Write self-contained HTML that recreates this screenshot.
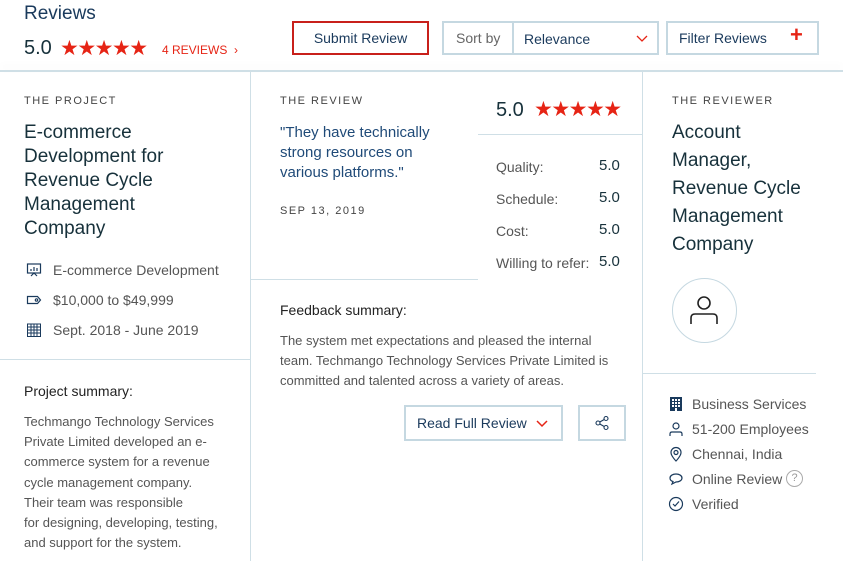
<!DOCTYPE html>
<html><head><meta charset="utf-8"><style>
*{margin:0;padding:0;box-sizing:border-box}
body{width:843px;height:561px;overflow:hidden;background:#fff;font-family:"Liberation Sans",sans-serif;position:relative;color:#555}
.a{position:absolute;white-space:nowrap}
.navy{color:#17313b}
.lab{font-size:11px;letter-spacing:1.5px;color:#444}
.star{color:#e62415}
.btn{position:absolute;border:2px solid #c5d8e1;font-size:14px;color:#1a3a5c}
.ln{position:absolute;background:#cfdfe6}
.ic{position:absolute;width:16px;height:16px}
</style></head><body>
<div class="a navy" style="left:24px;top:3px;font-size:19px;color:#1a3a5c">Reviews</div>
<div class="a navy" style="left:24px;top:37px;font-size:20px">5.0</div>
<div class="a star" style="left:60px;top:36px;font-size:21px;letter-spacing:-1.5px">★★★★★</div>
<div class="a star" style="left:162px;top:43px;font-size:12px">4 REVIEWS &nbsp;<span style="color:#e62415">›</span></div>
<div class="btn" style="left:292px;top:21px;width:137px;height:34px;border-color:#c8201b;text-align:center;line-height:30px">Submit Review</div>
<div class="btn" style="left:442px;top:21px;width:217px;height:34px"></div>
<div class="a" style="left:456px;top:30px;font-size:14px;color:#666">Sort by</div>
<div class="ln" style="left:512px;top:23px;width:2px;height:30px;background:#c5d8e1"></div>
<div class="a" style="left:524px;top:31px;font-size:14px;color:#1a3a5c">Relevance</div>
<svg class="ic" style="left:634px;top:31px" viewBox="0 0 16 16"><path d="M3 5l5 5 5-5" stroke="#e62415" stroke-width="1.3" fill="none"/></svg>
<div class="btn" style="left:666px;top:21px;width:153px;height:34px"></div>
<div class="a" style="left:679px;top:30px;font-size:14px;color:#1a3a5c">Filter Reviews</div>
<div class="a star" style="left:790px;top:22px;font-size:22px;font-weight:bold">+</div>
<div class="ln" style="left:0;top:70px;width:843px;height:2px;box-shadow:0 -4px 8px rgba(0,0,0,.05)"></div>
<div class="ln" style="left:250px;top:72px;width:1px;height:489px"></div>
<div class="ln" style="left:642px;top:72px;width:1px;height:489px"></div>
<div class="ln" style="left:0;top:359px;width:250px;height:1px"></div>
<div class="ln" style="left:250px;top:279px;width:228px;height:1px"></div>
<div class="ln" style="left:478px;top:134px;width:164px;height:1px"></div>
<div class="ln" style="left:642px;top:373px;width:174px;height:1px"></div>

<div class="a lab" style="left:24px;top:95px">THE PROJECT</div>
<div class="a navy" style="left:24px;top:121px;font-size:19px;line-height:24px">E-commerce<br>Development for<br>Revenue Cycle<br>Management<br>Company</div>
<svg class="ic" style="left:26px;top:262px" viewBox="0 0 16 16" fill="none" stroke="#1a3a5c" stroke-width="1.2"><rect x="1.5" y="2" width="13" height="9"/><path d="M5 14l3-3 3 3M5 9V7M8 9V5M11 9V6"/></svg>
<div class="a" style="left:53px;top:262px;font-size:14px">E-commerce Development</div>
<svg class="ic" style="left:26px;top:292px" viewBox="0 0 16 16" fill="none" stroke="#1a3a5c" stroke-width="1.2"><path d="M1.5 4.5h10l3 3.5-3 3.5h-10z"/><circle cx="10.5" cy="8" r="1.2"/></svg>
<div class="a" style="left:53px;top:292px;font-size:14px">$10,000 to $49,999</div>
<svg class="ic" style="left:26px;top:322px" viewBox="0 0 16 16" fill="none" stroke="#1a3a5c" stroke-width="1"><rect x="1.5" y="2" width="13" height="12.5"/><path d="M1.5 5h13M1.5 8h13M1.5 11h13M5 2v12.5M8 2v12.5M11 2v12.5"/></svg>
<div class="a" style="left:53px;top:322px;font-size:14px">Sept. 2018 - June 2019</div>
<div class="a" style="left:24px;top:383px;font-size:14px;color:#222">Project summary:</div>
<div class="a" style="left:24px;top:412px;font-size:13px;line-height:20.2px;color:#555">Techmango Technology Services<br>Private Limited developed an e-<br>commerce system for a revenue<br>cycle management company.<br>Their team was responsible<br>for designing, developing, testing,<br>and support for the system.</div>

<div class="a lab" style="left:280px;top:95px">THE REVIEW</div>
<div class="a" style="left:280px;top:123px;font-size:15px;line-height:20px;color:#1f4a78">"They have technically<br>strong resources on<br>various platforms."</div>
<div class="a lab" style="left:280px;top:205px">SEP 13, 2019</div>
<div class="a navy" style="left:496px;top:99px;font-size:20px">5.0</div>
<div class="a star" style="left:534px;top:97px;font-size:21px;letter-spacing:-1.5px">★★★★★</div>
<div class="a" style="left:496px;top:151px;font-size:14px;line-height:32px">Quality:<br>Schedule:<br>Cost:<br>Willing to refer:</div>
<div class="a navy" style="left:599px;top:150px;font-size:15px;line-height:32px">5.0<br>5.0<br>5.0<br>5.0</div>
<div class="a" style="left:280px;top:302px;font-size:14px;color:#222">Feedback summary:</div>
<div class="a" style="left:280px;top:331px;font-size:13px;line-height:20.2px">The system met expectations and pleased the internal<br>team. Techmango Technology Services Private Limited is<br>committed and talented across a variety of areas.</div>
<div class="btn" style="left:404px;top:405px;width:159px;height:36px"></div>
<div class="a" style="left:417px;top:415px;font-size:14px;color:#1a3a5c">Read Full Review</div>
<svg class="ic" style="left:534px;top:416px" viewBox="0 0 16 16"><path d="M3 5l5 5 5-5" stroke="#e62415" stroke-width="1.5" fill="none"/></svg>
<div class="btn" style="left:578px;top:405px;width:48px;height:36px"></div>
<svg class="ic" style="left:594px;top:415px" viewBox="0 0 16 16" fill="none" stroke="#1a3a5c" stroke-width="1.1"><circle cx="12" cy="3.5" r="2"/><circle cx="4" cy="8" r="2"/><circle cx="12" cy="12.5" r="2"/><path d="M5.8 7l4.4-2.5M5.8 9l4.4 2.5"/></svg>

<div class="a lab" style="left:672px;top:95px">THE REVIEWER</div>
<div class="a navy" style="left:672px;top:119px;font-size:19px;line-height:28px">Account<br>Manager,<br>Revenue Cycle<br>Management<br>Company</div>
<div class="a" style="left:672px;top:278px;width:65px;height:65px;border:1px solid #c5d8e1;border-radius:50%"></div>
<svg class="a" style="left:688px;top:294px" width="32" height="32" viewBox="0 0 32 32" fill="none" stroke="#222" stroke-width="1.6"><circle cx="16" cy="9" r="6"/><path d="M3 30v-6q0-4 4-4h18q4 0 4 4v6"/></svg>
<svg class="ic" style="left:668px;top:396px" viewBox="0 0 16 16" fill="#1a3a5c"><path d="M2 1h12v14H9v-3H7v3H2z M4 3v2h2V3zm3 0v2h2V3zm3 0v2h2V3zM4 6v2h2V6zm3 0v2h2V6zm3 0v2h2V6zM4 9v2h2V9zm3 0v2h2V9zm3 0v2h2V9z" fill-rule="evenodd"/></svg>
<div class="a" style="left:692px;top:392px;font-size:14px;line-height:25px">Business Services<br>51-200 Employees<br>Chennai, India<br>Online Review<br>Verified</div>
<svg class="ic" style="left:668px;top:421px" viewBox="0 0 16 16" fill="none" stroke="#1a3a5c" stroke-width="1.2"><circle cx="8" cy="5" r="3"/><path d="M2 15v-2q0-2 2-2h8q2 0 2 2v2"/></svg>
<svg class="ic" style="left:668px;top:446px" viewBox="0 0 16 16" fill="none" stroke="#1a3a5c" stroke-width="1.2"><path d="M8 15s-5-5-5-8.5a5 5 0 0110 0C13 10 8 15 8 15z"/><circle cx="8" cy="6.5" r="2"/></svg>
<svg class="ic" style="left:668px;top:471px" viewBox="0 0 16 16" fill="none" stroke="#1a3a5c" stroke-width="1.2"><path d="M2 7c0-2.5 3-4 6-4s6 1.5 6 4-3 4-6 4l-4 2 1-2.5C3 10 2 8.5 2 7z"/></svg>
<div class="a" style="left:786px;top:470px;width:17px;height:17px;border:1px solid #aaa;border-radius:50%;font-size:11px;color:#999;text-align:center;line-height:15px">?</div>
<svg class="ic" style="left:668px;top:496px" viewBox="0 0 16 16" fill="none" stroke="#1a3a5c" stroke-width="1.2"><circle cx="8" cy="8" r="6.5"/><path d="M5 8l2 2 4-4.5"/></svg>
</body></html>
